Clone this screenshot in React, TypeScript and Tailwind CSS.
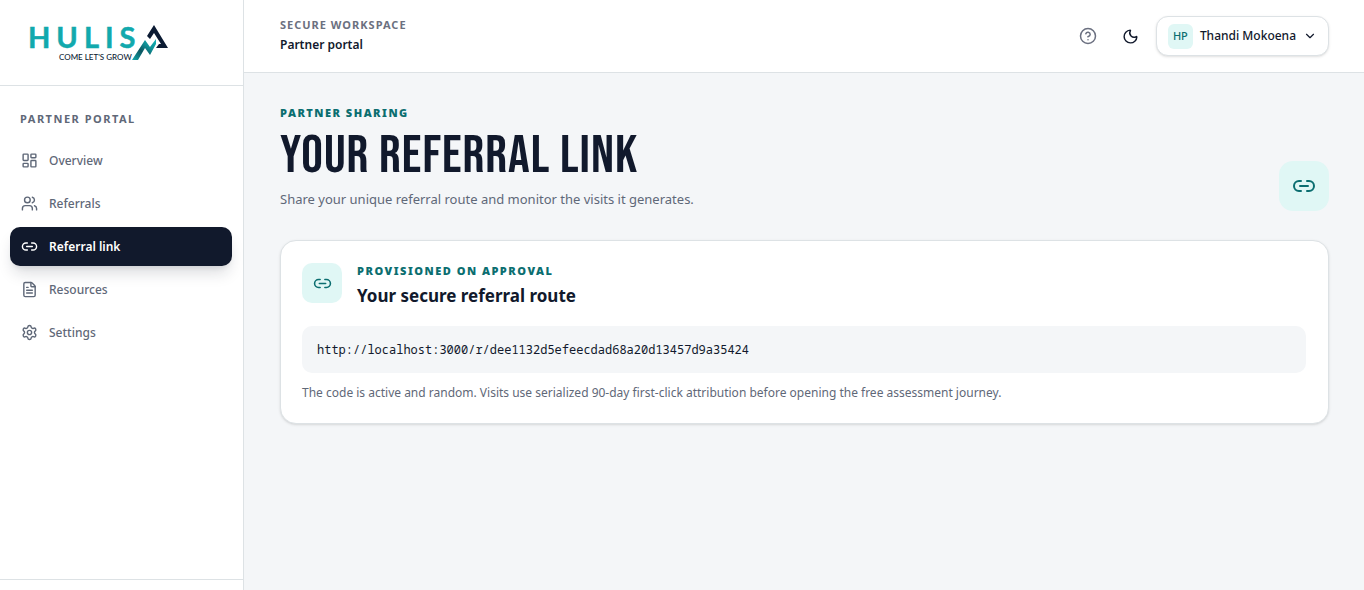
import {
  ChevronDown,
  CircleQuestionMark,
  FileText,
  LayoutDashboard,
  Link2,
  Moon,
  Settings,
  Users,
  type LucideIcon,
} from 'lucide-react';

interface NavItem {
  label: string;
  href: string;
  icon: LucideIcon;
}

const navItems: NavItem[] = [
  { label: 'Overview', href: '#overview', icon: LayoutDashboard },
  { label: 'Referrals', href: '#referrals', icon: Users },
  { label: 'Referral link', href: '#referral-link', icon: Link2 },
  { label: 'Resources', href: '#resources', icon: FileText },
  { label: 'Settings', href: '#settings', icon: Settings },
];

const activeHref = '#referral-link';
const referralUrl = 'http://localhost:3000/r/dee1132d5efeecdad68a20d13457d9a35424';

function Logo() {
  return (
    <svg
      width="142"
      height="38"
      viewBox="0 0 142 38"
      role="img"
      aria-label="Hulisa, come let's grow"
      className="overflow-visible"
    >
      <defs>
        <linearGradient id="bolt" x1="0" y1="1" x2="1" y2="0">
          <stop offset="0" stopColor="#12a9ad" />
          <stop offset="0.4" stopColor="#0b5560" />
          <stop offset="0.65" stopColor="#0f8f95" />
          <stop offset="1" stopColor="#12b5b8" />
        </linearGradient>
      </defs>
      <text
        x="-2"
        y="24"
        fill="#12a9ad"
        stroke="#12a9ad"
        strokeWidth="0.5"
        className="font-['Lato'] text-[29px] font-bold tracking-[6px]"
      >
        HULIS
      </text>
      <text x="29" y="36" fill="#0b1b33" className="font-['Lato'] text-[8px] font-medium">
        COME LET'S GROW
      </text>
      {/* peak */}
      <path d="M117 12 L124 1 L138 24 H126 L129 20 H131 L124 9 L120 15 Z" fill="#0b1b33" />
      {/* growth line */}
      <path d="M102 36 L115 16 L120 23 L126 15 L126 20 L120 31 L115 24 L108 36 Z" fill="url(#bolt)" />
    </svg>
  );
}

function Sidebar() {
  return (
    <aside className="flex w-[244px] shrink-0 flex-col border-r border-[#dde2e5] bg-white">
      <div className="flex h-[86px] items-center border-b border-[#dde2e5] px-[30px]">
        <Logo />
      </div>
      <nav className="flex flex-1 flex-col gap-1 pt-6 pr-[11px] pl-2.5" aria-label="Partner portal">
        <p className="mb-[9px] px-2.5 text-[11px] leading-[18px] font-bold tracking-[1.5px] text-[#5f6878]">
          PARTNER PORTAL
        </p>
        {navItems.map(({ label, href, icon: Icon }) => (
          <a
            key={href}
            href={href}
            aria-current={href === activeHref ? 'page' : undefined}
            className={
              href === activeHref
                ? 'flex h-[39px] items-center gap-[11px] rounded-[10px] bg-[#11192c] px-[11px] text-xs font-semibold text-white shadow-lg shadow-[#11192c]/15'
                : 'flex h-[39px] items-center gap-[11px] rounded-[10px] px-[11px] text-xs font-medium text-[#5f6878]'
            }
          >
            <Icon size={17} strokeWidth={2} />
            {label}
          </a>
        ))}
      </nav>
      <div className="h-[11px] border-t border-[#dde2e5]" />
    </aside>
  );
}

function Header() {
  return (
    <header className="flex h-[73px] items-center justify-between border-b border-[#dde2e5] bg-white pr-[35px] pl-9">
      <div className="pb-0.5">
        <p className="text-[11px] leading-5 font-bold tracking-[1px] text-[#6b7080]">SECURE WORKSPACE</p>
        <p className="text-xs leading-5 font-semibold">Partner portal</p>
      </div>
      <div className="flex items-center">
        <button type="button" aria-label="Help" className="mr-[25px] text-[#6b7080]">
          <CircleQuestionMark size={18} />
        </button>
        <button type="button" aria-label="Dark mode" className="mr-[17px]">
          <Moon size={17} />
        </button>
        <button
          type="button"
          className="flex h-10 items-center gap-[7px] rounded-xl border border-[#dde2e5] bg-white px-[11px] text-xs font-medium shadow-sm"
        >
          <span className="grid size-[25px] place-items-center rounded-md bg-[#e0f7f5] text-[11px] font-medium text-[#0b6e70]">
            HP
          </span>
          Thandi Mokoena
          <ChevronDown size={14} />
        </button>
      </div>
    </header>
  );
}

function App() {
  return (
    <div className="flex min-h-screen bg-[#f4f6f8] font-['Noto_Sans',sans-serif] text-[#11192c]">
      <Sidebar />
      <div className="min-w-0 flex-1">
        <Header />
        <main className="pt-[30px] pr-[35px] pl-9">
          <div className="flex items-end justify-between">
            <div>
              <p className="text-[11px] leading-5 font-black tracking-[1.5px] text-[#0b6e70]">PARTNER SHARING</p>
              <h1 className="pt-[3px] font-['Bebas_Neue','Liberation_Sans_Narrow','Liberation_Sans',sans-serif] text-[54px] leading-[60px] font-normal tracking-[1px]">
                YOUR REFERRAL LINK
              </h1>
              <p className="pt-px text-[13px] leading-6 text-[#5f6878]">
                Share your unique referral route and monitor the visits it generates.
              </p>
            </div>
            <div className="grid size-[50px] place-items-center rounded-[14px] bg-[#e0f7f5] text-[#0b6e70]">
              <Link2 size={24} />
            </div>
          </div>

          <section className="mt-[29px] rounded-2xl border border-[#dde2e5] bg-white pt-[21px] pr-[22px] pb-[18px] pl-[21px] shadow-sm">
            <div className="flex items-start gap-[15px]">
              <div className="mt-px grid size-10 place-items-center rounded-[10px] bg-[#e0f7f5] text-[#0b6e70]">
                <Link2 size={19} />
              </div>
              <div>
                <p className="text-[11px] leading-[18px] font-black tracking-[1.5px] text-[#0b6e70]">
                  PROVISIONED ON APPROVAL
                </p>
                <h2 className="text-[17px] leading-8 font-bold">Your secure referral route</h2>
              </div>
            </div>
            <div className="mt-[14px] rounded-[10px] bg-[#f4f6f8] px-[15px] py-[13px]">
              <code className="block font-['Noto_Sans_Mono','DejaVu_Sans_Mono',monospace] text-xs leading-[21px] break-all">
                {referralUrl}
              </code>
            </div>
            <p className="mt-2 text-xs leading-6 text-[#5f6878]">
              The code is active and random. Visits use serialized 90-day first-click attribution before opening the
              free assessment journey.
            </p>
          </section>
        </main>
      </div>
    </div>
  );
}

export default App;
